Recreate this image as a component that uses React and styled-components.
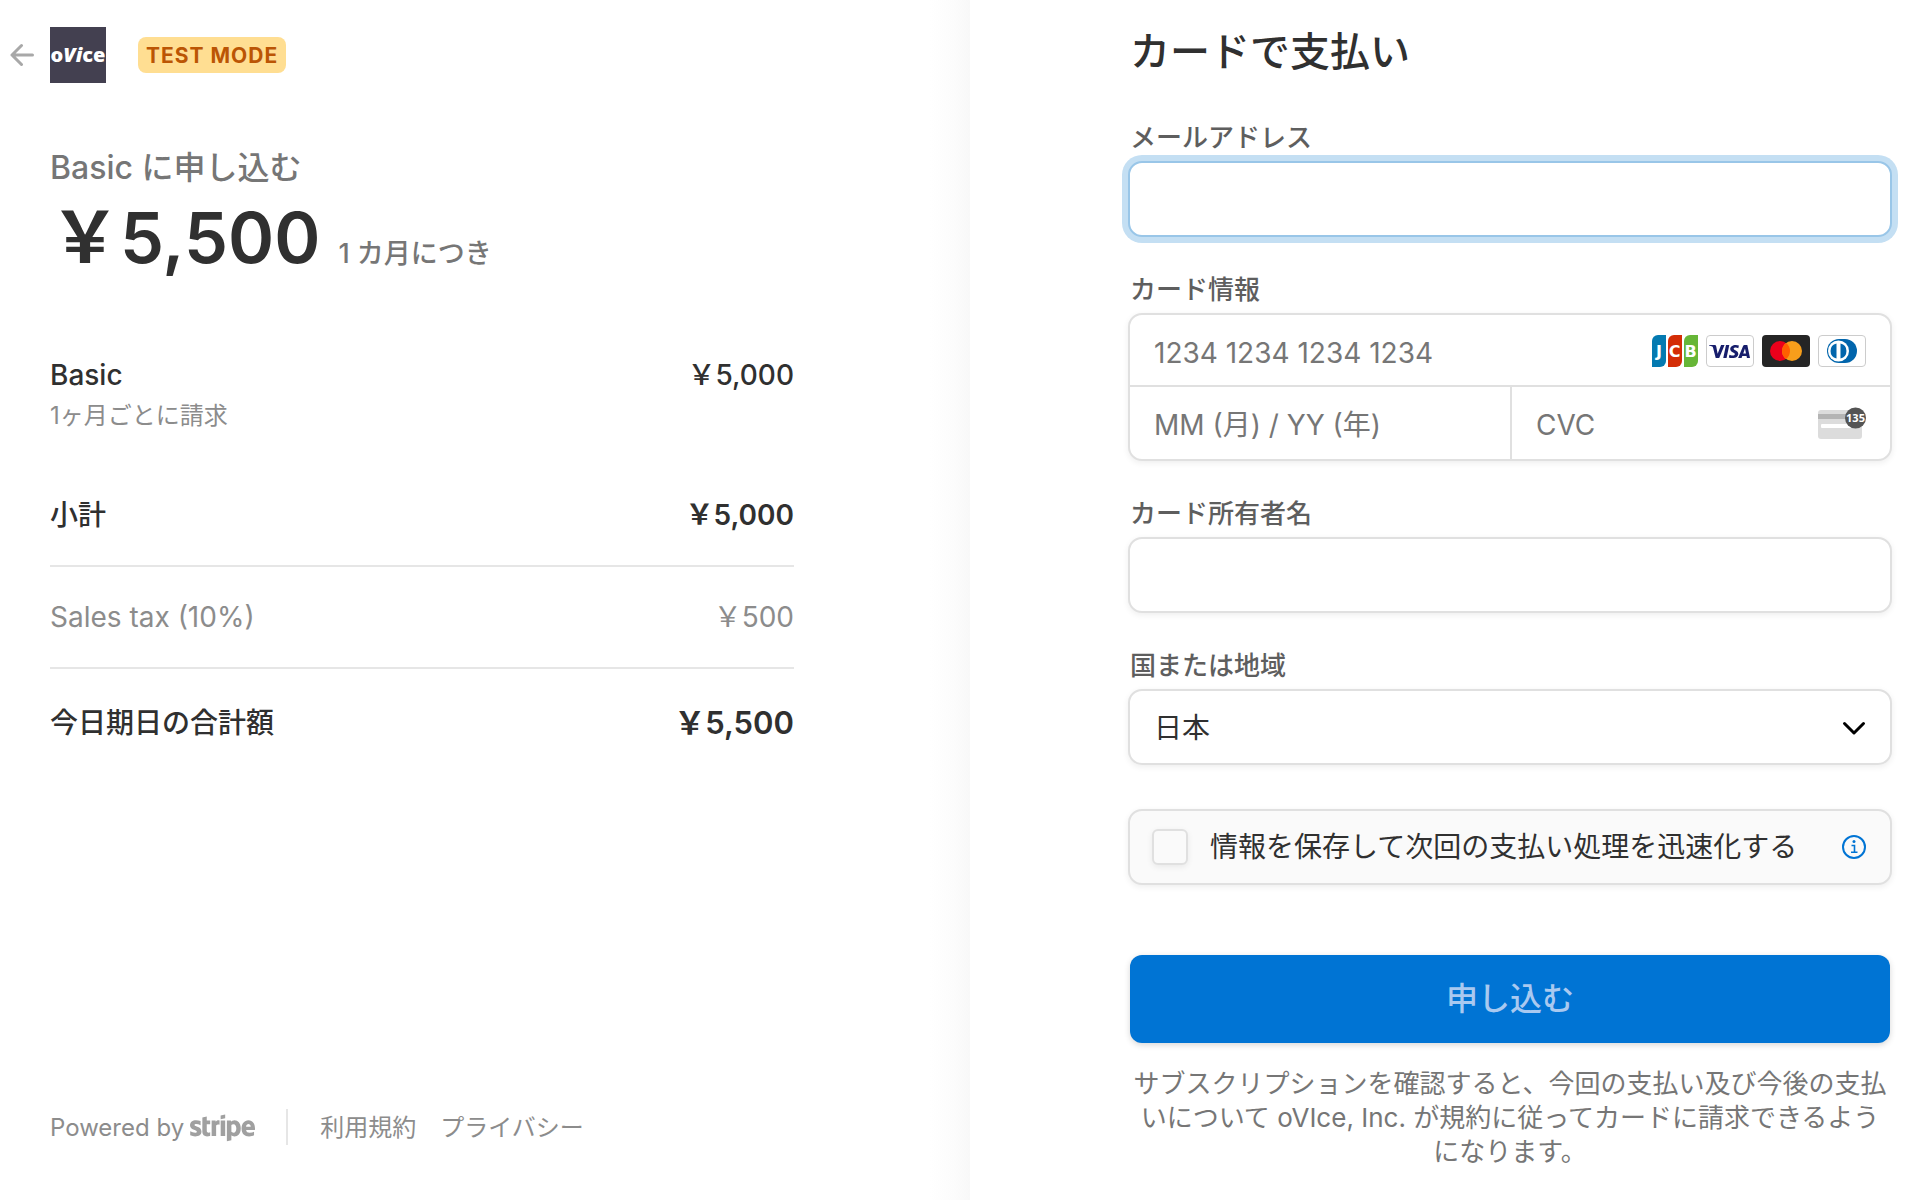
import styled, { createGlobalStyle } from "styled-components";
import { FaStripe } from "react-icons/fa";
import { SiVisa } from "react-icons/si";

const GlobalStyle = createGlobalStyle`
    *, *::before, *::after {
        box-sizing: border-box;
    }

    body {
        margin: 0;
        background-color: #fff;
        color: #303030;
        font-family: Inter, "Noto Sans CJK JP", sans-serif;
        font-size: 28px;
        line-height: 36px;
        -webkit-font-smoothing: antialiased;
    }

    h1, h2, p, dl, dd, dt {
        margin: 0;
        font-weight: inherit;
    }

    input, select, button {
        font: inherit;
        color: inherit;
    }
`

const Page = styled.div`
    display: grid;
    grid-template-columns: minmax(0, 970fr) minmax(0, 956fr);
    min-height: 100vh;
`

const Summary = styled.section`
    display: flex;
    flex-direction: column;
    padding: 27px 176px 55px 10px;
    background: linear-gradient(to left, #f8f8f8, #fcfcfc 16px, #fff 40px);
`

const Header = styled.header`
    display: flex;
    align-items: center;
    gap: 32px;
`

const BackLink = styled.a`
    display: flex;
    align-items: center;
    gap: 16px;
    text-decoration: none;
`

const MerchantLogo = styled.span`
    display: flex;
    align-items: center;
    justify-content: center;
    width: 56px;
    height: 56px;
    background-color: #434050;
    color: #fff;
    font-family: "Open Sans", sans-serif;
    font-size: 20px;
    font-weight: 800;
    line-height: 24px;
`

const Badge = styled.span`
    padding: 1px 8px 0;
    border-radius: 8px;
    background-color: #ffde92;
    color: #bb5504;
    font-size: 21px;
    font-weight: 700;
    line-height: 35px;
    letter-spacing: 1px;
`

const SummaryBody = styled.div`
    display: flex;
    flex: 1;
    flex-direction: column;
    padding-left: 40px;
`

const ProductName = styled.h1`
    margin-top: 65px;
    color: #767676;
    font-size: 32px;
    font-weight: 500;
    line-height: 40px;
`

const Price = styled.p`
    display: flex;
    align-items: baseline;
    gap: 18px;
    font-size: 70px;
    font-weight: 600;
    line-height: 100px;

    small {
        color: #767676;
        font-size: 27px;
        font-weight: 500;
    }
`

const Items = styled.dl`
    display: flex;
    flex-direction: column;
    margin-top: 53px;
`

const Item = styled.div`
    display: flex;
    align-items: center;
    justify-content: space-between;
    color: ${({ $muted }) => ($muted ? "#8c8c8c" : "#303030")};
    font-weight: ${({ $muted }) => ($muted ? 400 : 500)};

    dd {
        font-weight: ${({ $strong }) => ($strong ? 600 : "inherit")};
    }
`

const Interval = styled.dd`
    padding: 5px 0 63px;
    color: #8c8c8c;
    font-size: 24px;
`

const Subtotal = styled(Item)`
    padding-bottom: 32px;
`

const TaxRow = styled(Item)`
    padding: 32px 0;
    border-top: 2px solid #e6e6e6;
`

const Total = styled(Item)`
    padding-top: 36px;
    border-top: 2px solid #e6e6e6;

    dd {
        font-size: 31px;
    }
`

const Footer = styled.footer`
    display: flex;
    align-items: center;
    margin-top: auto;
    color: #8c8c8c;
    font-size: 24px;
    line-height: 34px;
    white-space: nowrap;

    a {
        padding-top: 2px;
        color: inherit;
        text-decoration: none;
    }
`

const PoweredBy = styled.a`
    display: flex;
    align-items: center;
    gap: 6px;
    padding-right: 31px;
    border-right: 2px solid #e6e6e6;

    svg {
        flex: none;
        width: 65px;
        height: 28px;
        color: #a0a0a0;
    }
`

const FooterLinks = styled.nav`
    display: flex;
    gap: 24px;
    padding-left: 32px;
`

const Payment = styled.main`
    padding: 26px 34px 31px 158px;
    background-color: #fff;
`

const Title = styled.h2`
    margin-bottom: 44px;
    padding-left: 2px;
    font-size: 40px;
    font-weight: 500;
    line-height: 52px;
`

const Fields = styled.div`
    display: flex;
    flex-direction: column;
    gap: 37px;
`

const Field = styled.div`
    display: flex;
    flex-direction: column;
    gap: 7px;
`

const Label = styled.label`
    padding-left: 2px;
    color: #5e5e5e;
    font-size: 26px;
    font-weight: 500;
    line-height: 32px;
`

const TextBox = styled.input`
    width: 100%;
    height: 76px;
    padding: 0 24px;
    border: 2px solid ${({ $active }) => ($active ? "#99c6e8" : "#e0e0e0")};
    border-radius: 14px;
    outline: none;
    background-color: #fff;
    box-shadow: ${({ $active }) => ($active ? "0 0 0 6px #c4dff3" : "0 2px 6px rgba(0, 0, 0, 0.07)")};

    &:focus {
        border-color: #99c6e8;
        box-shadow: 0 0 0 6px #c4dff3;
    }
`

const CardBox = styled.div`
    display: grid;
    grid-template-columns: repeat(2, minmax(0, 1fr));
    border: 2px solid #e0e0e0;
    border-radius: 14px;
    background-color: #fff;
    box-shadow: 0 2px 6px rgba(0, 0, 0, 0.07);
`

const CardCell = styled.div`
    display: flex;
    align-items: center;
    gap: 8px;
    height: 72px;
    padding: 0 24px;
    border-left: ${({ $split }) => ($split ? "2px solid #e0e0e0" : "none")};

    input {
        flex: 1;
        min-width: 0;
        height: 64px;
        padding: 3px 0 0;
        border: none;
        outline: none;
        background: transparent;
    }

    input::placeholder {
        color: #767676;
        opacity: 1;
    }

    svg {
        flex: none;
    }
`

const NumberCell = styled(CardCell)`
    grid-column: 1 / -1;
    padding-top: 2px;
    border-bottom: 2px solid #e0e0e0;
`

const SelectWrap = styled.div`
    position: relative;

    svg {
        position: absolute;
        top: 27px;
        right: 26px;
        pointer-events: none;
    }
`

const Select = styled(TextBox).attrs({ as: "select" })`
    appearance: none;
    padding-top: 2px;
`

const SaveBox = styled.div`
    display: flex;
    align-items: center;
    height: 76px;
    margin-top: 44px;
    padding: 0 24px 0 22px;
    border: 2px solid #e0e0e0;
    border-radius: 14px;
    background-color: #fafafa;
    box-shadow: 0 2px 6px rgba(0, 0, 0, 0.07);

    label {
        flex: 1;
        padding-left: 22px;
    }
`

const Checkbox = styled.input`
    appearance: none;
    width: 36px;
    height: 36px;
    margin: 0;
    border: 2px solid #e0e0e0;
    border-radius: 6px;
    background-color: #fafafa;
    box-shadow: 0 2px 6px rgba(0, 0, 0, 0.07);

    &:checked {
        background-color: #0074d4;
    }
`

const InfoButton = styled.button`
    display: flex;
    padding: 0;
    border: none;
    background: none;
    cursor: pointer;
`

const SubmitRow = styled.div`
    margin-top: 70px;
    padding: 0 2px;
`

const SubmitButton = styled.button`
    width: 100%;
    height: 88px;
    border: none;
    border-radius: 12px;
    background-color: #0074d4;
    box-shadow: 0 2px 6px rgba(0, 0, 0, 0.16);
    color: #a9c9f0;
    font-size: 32px;
    font-weight: 500;
    cursor: pointer;
`

const Terms = styled.p`
    margin-top: 24px;
    color: #767676;
    font-size: 26px;
    line-height: 34px;
    text-align: center;
`

const BackArrow = () => (
    <svg width="24" height="24" viewBox="0 0 24 24" fill="none" stroke="#a8a8a8" strokeWidth="3" strokeLinecap="round" strokeLinejoin="round" aria-hidden="true">
        <path d="M11.5 2.5L2 12l9.500 9.500M2 12h20.500" />
    </svg>
)

const JcbIcon = () => (
    <svg width="48" height="32" viewBox="0 0 48 32" role="img" aria-label="JCB">
        <path fill="#047ab1" d="M8 0h8v26a6 6 0 0 1-6 6H2V6a6 6 0 0 1 6-6z" />
        <path fill="#d42d06" d="M24 0h8v26a6 6 0 0 1-6 6h-8V6a6 6 0 0 1 6-6z" />
        <path fill="#67b637" d="M40 0h8v26a6 6 0 0 1-6 6h-8V6a6 6 0 0 1 6-6z" />
        <g fill="#fff" fontFamily="DejaVu Sans, sans-serif" fontSize="16" fontWeight="700" textAnchor="middle">
            <text x="9" y="22">J</text>
            <text x="24.500" y="22">C</text>
            <text x="40.500" y="22">B</text>
        </g>
    </svg>
)

const VisaIcon = () => (
    <svg width="48" height="32" viewBox="0 0 48 32" role="img" aria-label="Visa">
        <rect x="0.500" y="0.500" width="47" height="31" rx="3.500" fill="#fff" stroke="#ccc" />
        <SiVisa x="3" y="-4" size={41} color="#171e6c" />
    </svg>
)

const MastercardIcon = () => (
    <svg width="48" height="32" viewBox="0 0 48 32" role="img" aria-label="Mastercard">
        <rect width="48" height="32" rx="4" fill="#252525" />
        <circle cx="18" cy="16" r="10" fill="#eb001b" />
        <circle cx="30" cy="16" r="10" fill="#f79e1b" />
        <path fill="#ff5f00" d="M24 8a10 10 0 0 1 0 16 10 10 0 0 1 0-16z" />
    </svg>
)

const DinersIcon = () => (
    <svg width="48" height="32" viewBox="0 0 48 32" role="img" aria-label="Diners Club">
        <rect x="0.500" y="0.500" width="47" height="31" rx="3.500" fill="#fff" stroke="#ccc" />
        <path fill="#0165ac" d="M21 4h6a12 12 0 0 1 0 24h-6a12 12 0 0 1 0-24z" />
        <circle cx="20.500" cy="16" r="10.500" fill="#fff" />
        <path fill="#0165ac" d="M18.500 8.500v15a7.700 7.700 0 0 1 0-15zM22.500 8.500a7.700 7.700 0 0 1 0 15z" />
    </svg>
)

const CvcIcon = () => (
    <svg width="48" height="32" viewBox="0 0 48 32" aria-hidden="true">
        <rect y="3" width="44" height="29" rx="3" fill="#dcdcdc" />
        <rect y="7" width="44" height="5" fill="#b4b4b4" />
        <rect x="3" y="17" width="37" height="4" rx="1" fill="#fff" />
        <circle cx="37.500" cy="11" r="10.500" fill="#545454" />
        <text x="37.500" y="15" fill="#fff" fontFamily="Open Sans, sans-serif" fontSize="11" fontWeight="700" textAnchor="middle">135</text>
    </svg>
)

const ChevronIcon = () => (
    <svg width="24" height="24" viewBox="0 0 24 24" fill="none" stroke="#000" strokeWidth="3" strokeLinecap="round" strokeLinejoin="round" aria-hidden="true">
        <path d="M2.500 7.500l9.500 9.500 9.500-9.500" />
    </svg>
)

const InfoIcon = () => (
    <svg width="24" height="24" viewBox="0 0 24 24" fill="none" stroke="#0074d4" strokeWidth="2" aria-hidden="true">
        <circle cx="12" cy="12" r="11" />
        <path d="M9.500 10.500h3V17M9 17.200h6.500" strokeWidth="1.600" />
        <circle cx="12" cy="6.500" r="1.500" fill="#0074d4" stroke="none" />
    </svg>
)

const App = () => {
    return (
        <>
            <GlobalStyle />
            <Page>
                <Summary>
                    <Header>
                        <BackLink href="#back" aria-label="oVice">
                            <BackArrow />
                            <MerchantLogo>o<em>Vi</em>ce</MerchantLogo>
                        </BackLink>
                        <Badge>TEST MODE</Badge>
                    </Header>
                    <SummaryBody>
                        <ProductName>Basic に申し込む</ProductName>
                        <Price>￥5,500 <small>1 カ月につき</small></Price>
                        <Items>
                            <Item>
                                <dt>Basic</dt>
                                <dd>￥5,000</dd>
                            </Item>
                            <Interval>1ヶ月ごとに請求</Interval>
                            <Subtotal $strong>
                                <dt>小計</dt>
                                <dd>￥5,000</dd>
                            </Subtotal>
                            <TaxRow $muted>
                                <dt>Sales tax (10%)</dt>
                                <dd>￥500</dd>
                            </TaxRow>
                            <Total $strong>
                                <dt>今日期日の合計額</dt>
                                <dd>￥5,500</dd>
                            </Total>
                        </Items>
                        <Footer>
                            <PoweredBy href="#stripe">
                                Powered by
                                <FaStripe viewBox="0 122 640 270" aria-label="stripe" />
                            </PoweredBy>
                            <FooterLinks>
                                <a href="#terms">利用規約</a>
                                <a href="#privacy">プライバシー</a>
                            </FooterLinks>
                        </Footer>
                    </SummaryBody>
                </Summary>
                <Payment>
                    <Title>カードで支払い</Title>
                    <form onSubmit={(e) => e.preventDefault()}>
                        <Fields>
                            <Field>
                                <Label htmlFor="email">メールアドレス</Label>
                                <TextBox id="email" type="email" $active />
                            </Field>
                            <Field>
                                <Label htmlFor="cardNumber">カード情報</Label>
                                <CardBox>
                                    <NumberCell>
                                        <input id="cardNumber" type="text" inputMode="numeric" placeholder="1234 1234 1234 1234" />
                                        <JcbIcon />
                                        <VisaIcon />
                                        <MastercardIcon />
                                        <DinersIcon />
                                    </NumberCell>
                                    <CardCell>
                                        <input type="text" aria-label="有効期限" placeholder="MM (月) / YY (年)" />
                                    </CardCell>
                                    <CardCell $split>
                                        <input type="text" aria-label="CVC" placeholder="CVC" />
                                        <CvcIcon />
                                    </CardCell>
                                </CardBox>
                            </Field>
                            <Field>
                                <Label htmlFor="cardName">カード所有者名</Label>
                                <TextBox id="cardName" type="text" />
                            </Field>
                            <Field>
                                <Label htmlFor="country">国または地域</Label>
                                <SelectWrap>
                                    <Select id="country" defaultValue="JP">
                                        <option value="JP">日本</option>
                                    </Select>
                                    <ChevronIcon />
                                </SelectWrap>
                            </Field>
                        </Fields>
                        <SaveBox>
                            <Checkbox id="save" type="checkbox" />
                            <label htmlFor="save">情報を保存して次回の支払い処理を迅速化する</label>
                            <InfoButton type="button" aria-label="詳細">
                                <InfoIcon />
                            </InfoButton>
                        </SaveBox>
                        <SubmitRow>
                            <SubmitButton type="submit">申し込む</SubmitButton>
                        </SubmitRow>
                        <Terms>
                            サブスクリプションを確認すると、今回の支払い及び今後の支払いについて oVIce, Inc. が規約に従ってカードに請求できるようになります。
                        </Terms>
                    </form>
                </Payment>
            </Page>
        </>
    )
}

export default App
